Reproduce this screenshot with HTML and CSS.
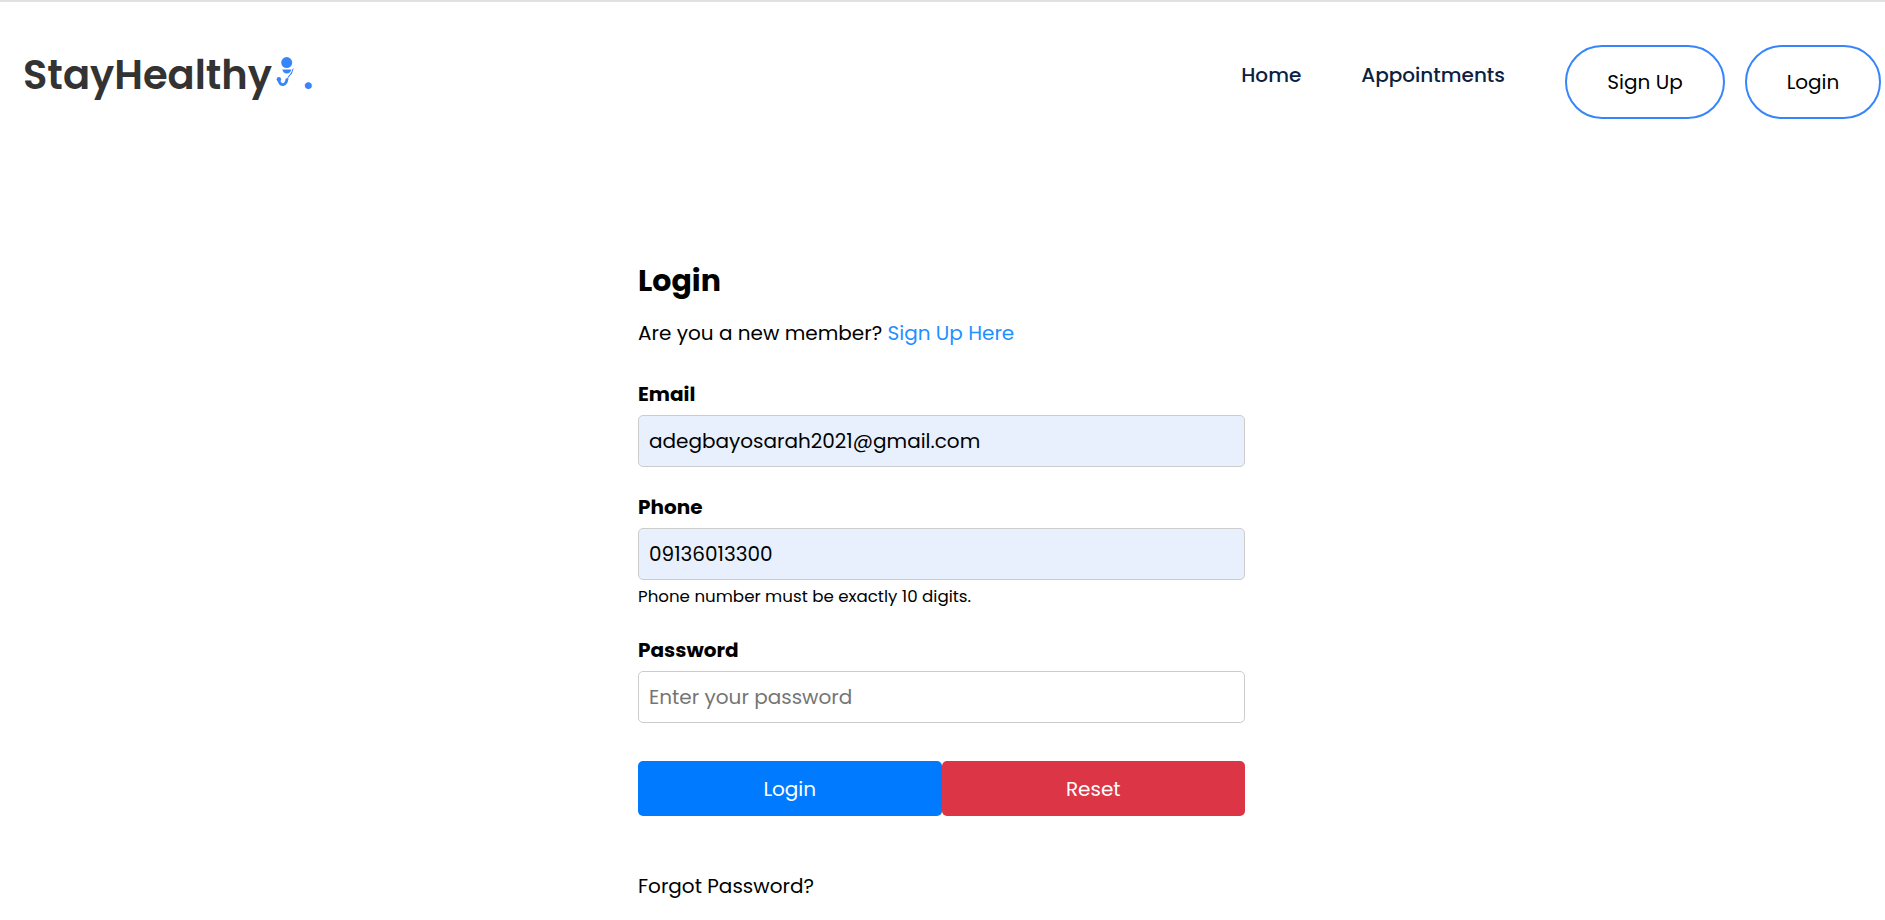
FILE: index.html
```html
<!DOCTYPE html>
<html lang="en">
<head>
<meta charset="utf-8">
<meta name="viewport" content="width=device-width, initial-scale=1">
<title>StayHealthy</title>
<link rel="stylesheet" href="styles.css">
</head>
<body>
<header class="navbar">
  <a class="logo" href="#">StayHealthy<svg class="logo-icon" viewBox="0 0 24 36" aria-hidden="true">
      <circle cx="12.7" cy="8.6" r="5.5"/>
      <path d="M8.4 15.6H17.4C16.9 18.4 15 19.6 12.8 19.6C10.6 19.6 8.8 18.4 8.4 15.6Z"/>
      <path class="stroke" d="M4.8 25.2C5 29.2 7 30.8 9.3 30.6C12 30.4 12.6 27.8 13.2 24.6"/>
      <path class="thin" d="M13 26C13.6 22.5 18.4 19.6 19.2 14.6"/>
      <path class="thin" d="M14.2 22.6L18.2 19"/>
      <circle cx="4.9" cy="25.3" r="2.2"/>
    </svg><span class="logo-dot">.</span></a>
  <nav class="menu">
    <a class="menu-link" href="#">Home</a>
    <a class="menu-link" href="#">Appointments</a>
    <div class="menu-actions">
      <button class="pill pill-wide" type="button">Sign Up</button>
      <button class="pill" type="button">Login</button>
    </div>
  </nav>
</header>
<main class="login">
  <h1 class="title">Login</h1>
  <p class="intro">Are you a new member? <a class="intro-link" href="#">Sign Up Here</a></p>
  <form>
    <div class="field">
      <label class="label" for="email">Email</label>
      <input class="input input-filled" id="email" type="email" value="adegbayosarah2021@gmail.com">
    </div>
    <div class="field">
      <label class="label" for="phone">Phone</label>
      <input class="input input-filled" id="phone" type="tel" value="09136013300" aria-describedby="phone-help">
      <small class="help" id="phone-help">Phone number must be exactly 10 digits.</small>
    </div>
    <div class="field">
      <label class="label" for="password">Password</label>
      <input class="input" id="password" type="password" placeholder="Enter your password">
    </div>
    <div class="buttons">
      <button class="button button-primary" type="submit">Login</button>
      <button class="button button-danger" type="reset">Reset</button>
    </div>
  </form>
  <a class="forgot" href="#">Forgot Password?</a>
</main>
</body>
</html>
```
FILE: styles.css
```css
* {
  box-sizing: border-box;
}

body {
  margin: 0;
  border-top: 2px solid #e1e1e1;
  background: #fff;
  color: #000;
  font-family: Poppins, Inter, "Open Sans", sans-serif;
  font-size: 20px;
  line-height: 30px;
}

a {
  color: inherit;
  text-decoration: none;
}

.navbar {
  display: flex;
  justify-content: space-between;
  align-items: flex-start;
  padding: 43px 4px 0 23px;
}

.logo {
  display: flex;
  color: #333;
  font-size: 40px;
  font-weight: 600;
  line-height: 60px;
}

.logo-icon {
  flex: none;
  width: 24px;
  height: 36px;
  margin: 9px 5px 0 2px;
  fill: #3685fb;
}

.logo-icon .stroke,
.logo-icon .thin {
  fill: none;
  stroke: #3685fb;
  stroke-width: 2.8;
}

.logo-icon .thin {
  stroke-width: 1;
}

.logo-dot {
  color: #3685fb;
}

.menu {
  display: flex;
  gap: 60px;
}

.menu-link {
  padding-top: 15px;
  color: #0c213f;
  font-weight: 500;
}

.menu-actions {
  display: flex;
  gap: 20px;
}

.pill {
  min-width: 136px;
  height: 74px;
  padding: 0 38px;
  border: 2px solid #3685fb;
  border-radius: 37px;
  background: #fff;
  color: #000;
  font: inherit;
}

.pill-wide {
  min-width: 160px;
}

.login {
  width: 90%;
  max-width: 609px;
  margin: 139px auto 0;
  padding-right: 2px;
}

.title {
  margin: 0 0 15px;
  font-size: 30px;
  font-weight: 700;
  line-height: 45px;
}

.intro {
  margin: 0 0 31px;
}

.intro-link {
  color: #1e90ff;
}

.field {
  display: flex;
  flex-direction: column;
  margin-bottom: 25px;
}

.label {
  margin-bottom: 6px;
  font-weight: 700;
}

.input {
  width: 100%;
  height: 52px;
  padding: 0 10px;
  border: 1px solid #ccc;
  border-radius: 5px;
  background: #fff;
  color: #000;
  font: inherit;
}

.input::placeholder {
  color: #757575;
}

.input-filled {
  background: #e8f0fe;
}

.help {
  padding-top: 4px;
  font-size: smaller;
  line-height: 26px;
}

.buttons {
  display: flex;
  margin: 38px 0 55px;
}

.button {
  flex: 1;
  height: 55px;
  border: 0;
  border-radius: 5px;
  color: #fff;
  font: inherit;
}

.button-primary {
  background: #007bff;
}

.button-danger {
  background: #dc3545;
}
```
